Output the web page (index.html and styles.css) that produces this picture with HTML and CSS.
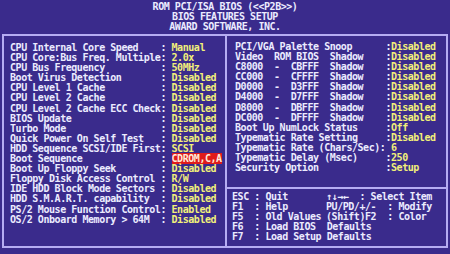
FILE: index.html
```html
<!doctype html>
<html lang="en">
  <head>
    <title>BIOS Features Setup</title>
    <link rel="stylesheet" href="styles.css">
  </head>

  <body>
    <div class="screen">
      <header class="title">
        <div>ROM PCI/ISA BIOS (&lt;&lt;P2B&gt;&gt;)</div>
        <div>BIOS FEATURES SETUP</div>
        <div>AWARD SOFTWARE, INC.</div>
      </header>

      <div class="frame">
        <!-- left column of options -->
        <div class="pane main">
          <div>CPU Internal Core Speed    : <span class="val">Manual</span></div>
          <div>CPU Core:Bus Freq. Multiple: <span class="val">2.0x</span></div>
          <div>CPU Bus Frequency          : <span class="val">50MHz</span></div>
          <div>Boot Virus Detection       : <span class="val">Disabled</span></div>
          <div>CPU Level 1 Cache          : <span class="val">Disabled</span></div>
          <div>CPU Level 2 Cache          : <span class="val">Disabled</span></div>
          <div>CPU Level 2 Cache ECC Check: <span class="val">Disabled</span></div>
          <div>BIOS Update                : <span class="val">Disabled</span></div>
          <div>Turbo Mode                 : <span class="val">Disabled</span></div>
          <div>Quick Power On Self Test   : <span class="val">Disabled</span></div>
          <div>HDD Sequence SCSI/IDE First: <span class="val">SCSI</span></div>
          <div>Boot Sequence              : <span class="hl">CDROM,C,A</span></div>
          <div>Boot Up Floppy Seek        : <span class="val">Disabled</span></div>
          <div>Floppy Disk Access Control : <span class="val">R/W</span></div>
          <div>IDE HDD Block Mode Sectors : <span class="val">Disabled</span></div>
          <div>HDD S.M.A.R.T. capability  : <span class="val">Disabled</span></div>
          <div>PS/2 Mouse Function Control: <span class="val">Enabled</span></div>
          <div>OS/2 Onboard Memory &gt; 64M  : <span class="val">Disabled</span></div>
        </div>

        <div class="side">
          <div class="pane options">
            <div>PCI/VGA Palette Snoop      :<span class="val">Disabled</span></div>
            <div>Video  ROM BIOS  Shadow    :<span class="val">Disabled</span></div>
            <div>C8000  -  CBFFF  Shadow    :<span class="val">Disabled</span></div>
            <div>CC000  -  CFFFF  Shadow    :<span class="val">Disabled</span></div>
            <div>D0000  -  D3FFF  Shadow    :<span class="val">Disabled</span></div>
            <div>D4000  -  D7FFF  Shadow    :<span class="val">Disabled</span></div>
            <div>D8000  -  DBFFF  Shadow    :<span class="val">Disabled</span></div>
            <div>DC000  -  DFFFF  Shadow    :<span class="val">Disabled</span></div>
            <div>Boot Up NumLock Status     :<span class="val">Off</span></div>
            <div>Typematic Rate Setting     :<span class="val">Disabled</span></div>
            <div>Typematic Rate (Chars/Sec): <span class="val">6</span></div>
            <div>Typematic Delay (Msec)     :<span class="val">250</span></div>
            <div>Security Option            :<span class="val">Setup</span></div>
          </div>

          <!-- key help -->
          <div class="pane keys">
            <div class="key-row"><span class="key">ESC : Quit</span><span class="key-alt">↑↓→←  : Select Item</span></div>
            <div class="key-row"><span class="key">F1  : Help</span><span class="key-alt">PU/PD/+/-  : Modify</span></div>
            <div class="key-row"><span class="key">F5  : Old Values</span><span class="key-alt">(Shift)F2  : Color</span></div>
            <div>F6  : Load BIOS  Defaults</div>
            <div>F7  : Load Setup Defaults</div>
          </div>
        </div>
      </div>
    </div>
  </body>
</html>
```

FILE: styles.css
```css
body {
  margin: 0;
  background: #3a2b8c;
}

.screen {
  width: 450px;
  height: 254px;
  overflow: hidden;
  color: #ecebff;
  font: bold 10px/10.1px "DejaVu Sans Mono", monospace;
  letter-spacing: -0.45px;
}

.title {
  text-align: center;
  padding-top: 2px;
  line-height: 10px;
}

.frame {
  display: grid;
  grid-template-columns: 221px 1fr;
  height: 210px;
  margin: 2px 2px 0;
  border: 2px solid #b5acf2;
}

.pane > div {
  white-space: pre;
}

.main {
  padding: 7px 0 0 6px;
}

.side {
  display: grid;
  grid-template-rows: 151px 1fr;
  border-left: 2px solid #b5acf2;
}

.options {
  padding: 6px 0 0 8px;
}

.keys {
  padding: 3px 0 0 5px;
  border-top: 2px solid #b5acf2;
}

.key-row {
  display: flex;
}

.key {
  width: 94px;
}

.key-alt {
  white-space: pre;
}

.val {
  color: #f2f07a;
}

.hl {
  background: #e01b1b;
  color: #ffe9d8;
}
```
